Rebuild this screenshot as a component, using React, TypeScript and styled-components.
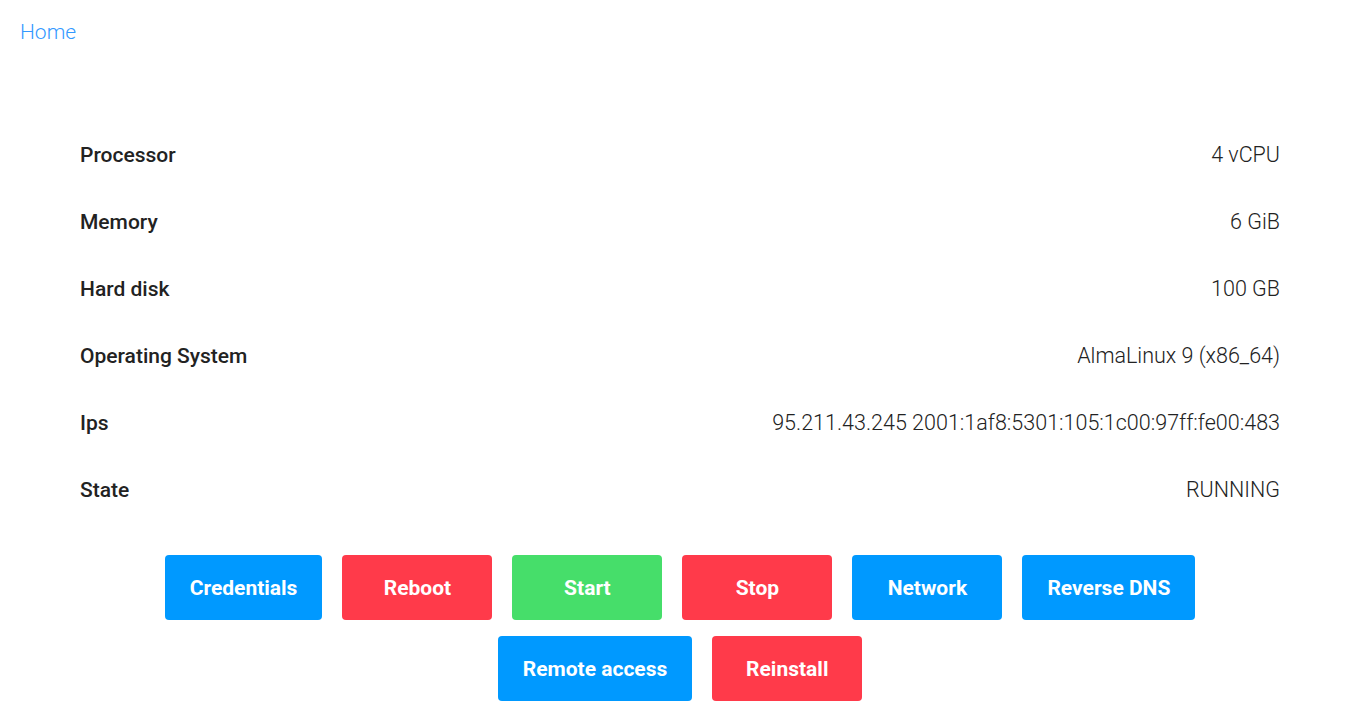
import React from "react";
import styled, { createGlobalStyle } from "styled-components";

const Global = createGlobalStyle`
  html, body { margin: 0; padding: 0; background: #fff; }
  body { font-family: Roboto, "Noto Sans", sans-serif; color: #222; }
`;

const Page = styled.div`
  display: flex;
  flex-direction: column;
`;

const Nav = styled.nav`
  padding: 19px 20px 0;
  height: 41px;
`;

const HomeLink = styled.a`
  font-size: 21px;
  font-weight: 300;
  color: #3399ff;
  text-decoration: none;
  line-height: 27px;
`;

const Specs = styled.div`
  margin: 61px 80px 0;
  display: flex;
  flex-direction: column;
`;

const Row = styled.div`
  display: flex;
  justify-content: space-between;
  align-items: center;
  height: 67px;
  font-size: 21px;
  line-height: 26px;
`;

const Label = styled.span`
  font-weight: 500;
  color: #222;
`;

const Value = styled.span`
  font-weight: 300;
  color: #222;
  font-size: 21.5px;
`;

const Actions = styled.div`
  margin-top: 32px;
  display: flex;
  flex-wrap: wrap;
  justify-content: center;
  row-gap: 16px;
  column-gap: 20px;
  padding: 0 150px;
`;

const Button = styled.button<{ $tone: "blue" | "red" | "green" }>`
  height: 65px;
  min-width: 150px;
  padding: 0 25px;
  border: none;
  border-radius: 4px;
  font-family: Roboto, sans-serif;
  font-size: 21px;
  font-weight: 700;
  color: #fff;
  cursor: pointer;
  background: ${(p) =>
    p.$tone === "blue" ? "#0099ff" : p.$tone === "red" ? "#ff3a4a" : "#46de6a"};
`;

const specs: [string, string][] = [
  ["Processor", "4 vCPU"],
  ["Memory", "6 GiB"],
  ["Hard disk", "100 GB"],
  ["Operating System", "AlmaLinux 9 (x86_64)"],
  ["Ips", "95.211.43.245 2001:1af8:5301:105:1c00:97ff:fe00:483"],
  ["State", "RUNNING"],
];

const buttons: [string, "blue" | "red" | "green"][] = [
  ["Credentials", "blue"],
  ["Reboot", "red"],
  ["Start", "green"],
  ["Stop", "red"],
  ["Network", "blue"],
  ["Reverse DNS", "blue"],
  ["Remote access", "blue"],
  ["Reinstall", "red"],
];

export default function App() {
  return (
    <Page>
      <Global />
      <Nav>
        <HomeLink href="#">Home</HomeLink>
      </Nav>
      <Specs>
        {specs.map(([l, v]) => (
          <Row key={l}>
            <Label>{l}</Label>
            <Value>{v}</Value>
          </Row>
        ))}
      </Specs>
      <Actions>
        {buttons.map(([t, tone]) => (
          <Button key={t} $tone={tone}>
            {t}
          </Button>
        ))}
      </Actions>
    </Page>
  );
}
